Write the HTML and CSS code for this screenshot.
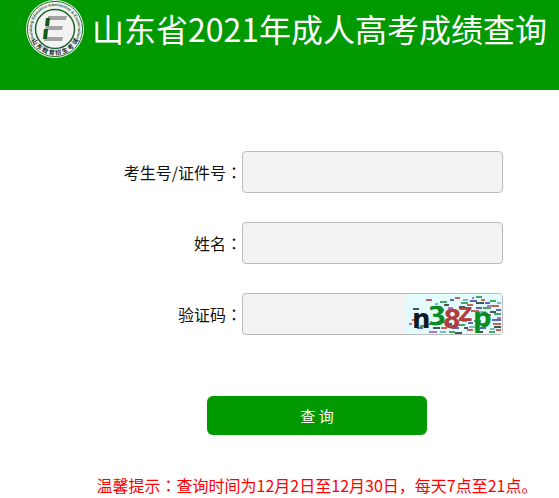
FILE: index.html
```html
<!DOCTYPE html>
<html lang="zh-CN">
<head>
<meta charset="utf-8">
<meta name="viewport" content="width=device-width, initial-scale=1">
<title>山东省2021年成人高考成绩查询</title>
<link rel="stylesheet" href="styles.css">
</head>
<body>
<header class="banner">
  <svg class="logo" viewBox="0 0 58 58" aria-hidden="true">
    <defs>
      <path id="arc-top" d="M10 42A23 23 0 1 1 48 42"/>
      <path id="arc-bottom" d="M3.500 33A25.800 25.800 0 0 0 54.500 33"/>
    </defs>
    <circle cx="29" cy="29" r="29" fill="#f2f5f2"/>
    <circle cx="29" cy="29" r="27.6" fill="none" stroke="#286b2d" stroke-width="1"/>
    <circle cx="29" cy="29" r="19.5" fill="#f3f3f3" stroke="#215f27" stroke-width="1.5"/>
    <text class="seal-en"><textPath href="#arc-top" startOffset="50%">Shandong Education Admissions &amp; Examinations</textPath></text>
    <text class="seal-cn"><textPath href="#arc-bottom" startOffset="50%">山 东 教 育 招 生 考 试</textPath></text>
    <path d="M22 16h19l-1 4H22zM20 26h17l-1 4H19zM19 37h18l-1 4H18z" fill="#a3a3a3"/>
    <path d="M20 18h4l-1 8h-4zM18 29h4l-1 10h-4z" fill="#145b19"/>
  </svg>
  <h1 class="title">山东省2021年成人高考成绩查询</h1>
</header>
<main class="content">
  <form class="query">
    <div class="row">
      <label for="number">考生号/证件号<span class="colon" lang="ja">：</span></label>
      <input class="field" id="number" type="text">
    </div>
    <div class="row">
      <label for="name">姓名<span class="colon" lang="ja">：</span></label>
      <input class="field" id="name" type="text">
    </div>
    <div class="row">
      <label for="code">验证码<span class="colon" lang="ja">：</span></label>
      <div class="code-box">
        <input class="code-input" id="code" type="text">
        <svg class="captcha" viewBox="0 0 96 40" role="img" aria-label="验证码">
          <rect width="96" height="40" fill="#e3fbfb"/>
          <g fill="none" stroke-width="1.500">
            <path stroke="#b5302a" d="M20 6h6M49 4h5M61 11h6M75 6h4M86 12h7M27 13h5M65 17h8M87 30h8M6 26h5M35 34h6M61 36h6M76 21h9M90 36h5"/>
            <path stroke="#108a30" d="M34 8h7M55 9h7M70 3h6M84 7h6M77 14h8M88 20h7M14 32h6M31 28h7M51 31h8M83 38h6M43 38h6M68 27h7"/>
            <path stroke="#2c39a0" d="M44 6h4M64 7h7M79 9h5M90 16h5M70 14h6M23 30h5M46 34h7M74 34h6M86 26h9M62 29h5M32 16h6M11 34h6"/>
            <path stroke="#152025" d="M7 15h6M38 11h5M53 13h6M70 9h8M84 18h6M88 33h7M27 34h7M58 34h4M40 30h6M49 39h7M70 38h7"/>
            <path stroke="#9c4caa" d="M42 14h5M66 4h2M81 12h5M91 24h4M23 38h8M56 27h5M77 30h4M3 30h3"/>
            <path stroke="#5aa9ae" d="M29 10h3M57 6h5M73 18h7M91 9h4M34 38h6M63 33h8M84 35h5M18 25h4"/>
          </g>
          <g class="captcha-text">
            <text x="6" y="34" fill="#101820">n</text>
            <text x="22" y="31" fill="#0a8c20" transform="rotate(-4 30 22)">3</text>
            <text x="37" y="34" fill="#b23c40" transform="rotate(5 45 24)">8</text>
            <text class="captcha-small" x="52" y="27" fill="#b23c40">Z</text>
            <text x="67" y="33" fill="#0a8c20">p</text>
          </g>
        </svg>
      </div>
    </div>
    <button class="submit" type="submit">查 询</button>
  </form>
  <p class="tip">温馨提示<span class="colon" lang="ja">：</span>查询时间为12月2日至12月30日，每天7点至21点。</p>
</main>
</body>
</html>
```
FILE: styles.css
```css
* {
  box-sizing: border-box;
}

body {
  margin: 0;
  background: #fff;
  color: #111;
  font: 16px/24px "Noto Sans CJK SC", sans-serif;
}

.banner {
  display: flex;
  align-items: flex-start;
  gap: 8px;
  height: 90px;
  padding-left: 26px;
  background: #090;
}

.logo {
  flex: none;
  width: 58px;
  height: 58px;
}

.seal-en {
  font: bold 4px "Liberation Sans", sans-serif;
  fill: #24542a;
  text-anchor: middle;
}

.seal-cn {
  font: bold 6px "Noto Sans CJK SC", sans-serif;
  fill: #222;
  text-anchor: middle;
}

.title {
  margin: 0;
  padding-top: 5px;
  color: #fff;
  font: 400 32px/46px "Noto Sans CJK SC", sans-serif;
  white-space: nowrap;
}

.content {
  padding: 61px 0 0 75px;
}

.query {
  display: flex;
  flex-direction: column;
  gap: 29px;
}

.row {
  display: grid;
  grid-template-columns: 167fr 261fr 56fr;
  align-items: center;
}

label {
  text-align: right;
  white-space: nowrap;
}

.colon {
  font-family: "Noto Sans CJK JP", sans-serif;
}

.field,
.code-box {
  width: 100%;
  height: 42px;
  border: 1px solid #bbb;
  border-radius: 4px;
  background: #f3f3f3;
}

.field {
  padding: 0 8px;
  font: inherit;
}

.code-box {
  display: flex;
  overflow: hidden;
}

.code-input {
  flex: 1;
  min-width: 0;
  padding: 0 8px;
  border: 0;
  background: transparent;
  font: inherit;
}

.captcha {
  flex: none;
  width: 96px;
  height: 40px;
}

.captcha-text {
  font: bold 26px "DejaVu Sans", sans-serif;
}

.captcha-small {
  font-size: 20px;
}

.submit {
  align-self: center;
  width: 220px;
  height: 39px;
  margin-top: 32px;
  border: 0;
  border-radius: 6px;
  background: #090;
  color: #fff;
  font: 15px/24px "Noto Sans CJK SC", sans-serif;
}

.tip {
  margin: 38px 0 0;
  color: #f00;
  text-align: center;
  white-space: nowrap;
}
```
